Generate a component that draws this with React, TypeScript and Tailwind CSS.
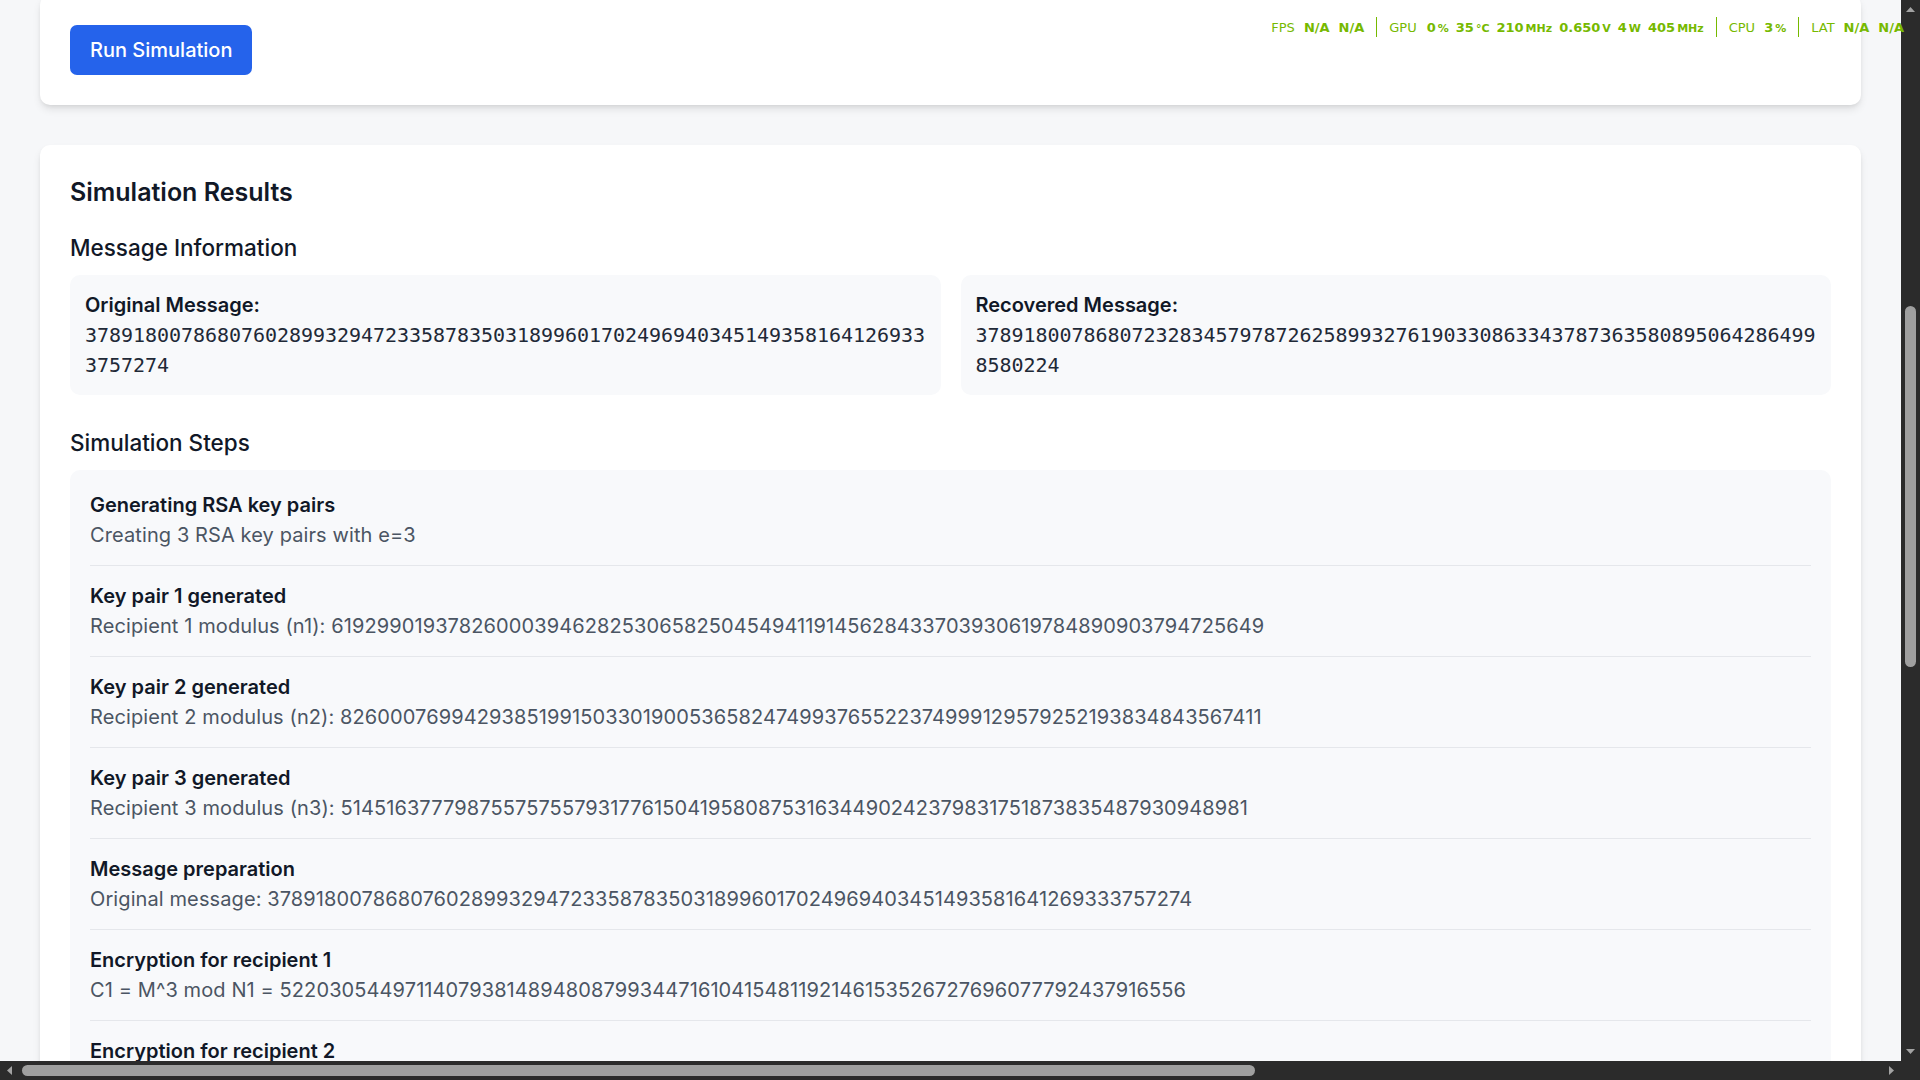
import React from "react";

const steps: { title: string; desc: string }[] = [
  { title: "Generating RSA key pairs", desc: "Creating 3 RSA key pairs with e=3" },
  {
    title: "Key pair 1 generated",
    desc: "Recipient 1 modulus (n1): 61929901937826000394628253065825045494119145628433703930619784890903794725649",
  },
  {
    title: "Key pair 2 generated",
    desc: "Recipient 2 modulus (n2): 82600076994293851991503301900536582474993765522374999129579252193834843567411",
  },
  {
    title: "Key pair 3 generated",
    desc: "Recipient 3 modulus (n3): 51451637779875575755793177615041958087531634490242379831751873835487930948981",
  },
  {
    title: "Message preparation",
    desc: "Original message: 37891800786807602899329472335878350318996017024969403451493581641269333757274",
  },
  {
    title: "Encryption for recipient 1",
    desc: "C1 = M^3 mod N1 = 52203054497114079381489480879934471610415481192146153526727696077792437916556",
  },
  {
    title: "Encryption for recipient 2",
    desc: "C2 = M^3 mod N2 = 41207795630931127735006215590846913562337917548340151093011376294488208012657",
  },
];

function Val({ v, u }: { v: string; u?: string }) {
  return (
    <span className="flex items-baseline">
      <span className="font-bold">{v}</span>
      {u ? <span className="ml-[2px] text-[11px] font-bold">{u}</span> : null}
    </span>
  );
}

function Sep() {
  return <span className="mx-[12px] h-[20px] w-px bg-[#76b900]" />;
}

function Overlay() {
  return (
    <div className="absolute right-[16px] top-[17px] flex h-[20px] items-center font-['DejaVu_Sans',sans-serif] text-[13px] leading-none text-[#76b900]">
      <span className="flex items-center gap-[9px]">
        <span>FPS</span>
        <Val v="N/A" />
        <Val v="N/A" />
      </span>
      <Sep />
      <span className="flex items-center gap-[7px]">
        <span className="mr-[3px]">GPU</span>
        <Val v="0" u="%" />
        <Val v="35" u="°C" />
        <Val v="210" u="MHz" />
        <Val v="0.650" u="V" />
        <Val v="4" u="W" />
        <Val v="405" u="MHz" />
      </span>
      <Sep />
      <span className="flex items-center gap-[9px]">
        <span>CPU</span>
        <Val v="3" u="%" />
      </span>
      <Sep />
      <span className="flex items-center gap-[9px]">
        <span>LAT</span>
        <Val v="N/A" />
        <Val v="N/A" />
      </span>
    </div>
  );
}

function Tri({ dir }: { dir: "up" | "down" | "left" | "right" }) {
  const pts =
    dir === "up"
      ? "1,8 5.5,3 10,8"
      : dir === "down"
      ? "1,3 5.5,8 10,3"
      : dir === "left"
      ? "8,1 3,5.5 8,10"
      : "3,1 8,5.5 3,10";
  return (
    <svg width="11" height="11" viewBox="0 0 11 11">
      <polygon points={pts} fill="#a3a3a3" />
    </svg>
  );
}

function MsgBox({ label, value }: { label: string; value: string }) {
  const a = value.slice(0, 70);
  const b = value.slice(70);
  return (
    <div className="rounded-[10px] bg-[#f8f9fb] p-[15px]">
      <div className="text-[20px] font-semibold leading-[30px] text-[#111827]">{label}</div>
      <div className="font-['DejaVu_Sans_Mono',monospace] text-[20px] leading-[30px] tracking-[-0.04px] whitespace-nowrap text-[#1f2937]">
        <div>{a}</div>
        <div>{b}</div>
      </div>
    </div>
  );
}

export default function App() {
  return (
    <div className="relative flex h-[1080px] w-[1920px] flex-col overflow-hidden bg-[#f6f7f9] font-['Inter',sans-serif]">
      <div className="flex min-h-0 flex-1">
        <main className="min-w-0 flex-1 overflow-hidden px-[40px]">
          <section className="-mt-[5px] rounded-[10px] bg-white p-[30px] shadow-[0_5px_8px_-1px_rgba(0,0,0,0.1),0_2px_5px_-2px_rgba(0,0,0,0.1)]">
            <button className="h-[50px] rounded-[7px] bg-[#2563eb] px-[20px] text-[20px] font-medium leading-[30px] text-white">
              Run Simulation
            </button>
          </section>

          <section className="mt-[40px] rounded-[10px] bg-white p-[30px] shadow-[0_5px_8px_-1px_rgba(0,0,0,0.1),0_2px_5px_-2px_rgba(0,0,0,0.1)]">
            <h2 className="mb-[20px] text-[25px] font-semibold leading-[35px] text-[#111827]">Simulation Results</h2>
            <h3 className="mb-[10px] text-[22.5px] font-medium leading-[35px] text-[#111827]">Message Information</h3>
            <div className="grid grid-cols-2 gap-[20px]">
              <MsgBox
                label="Original Message:"
                value="37891800786807602899329472335878350318996017024969403451493581641269333757274"
              />
              <MsgBox
                label="Recovered Message:"
                value="37891800786807232834579787262589932761903308633437873635808950642864998580224"
              />
            </div>

            <h3 className="mb-[10px] mt-[30px] text-[22.5px] font-medium leading-[35px] text-[#111827]">Simulation Steps</h3>
            <div className="flex flex-col gap-[15px] rounded-[10px] bg-[#f8f9fb] p-[20px]">
              {steps.map((s) => (
                <div key={s.title} className="border-b border-[#e5e7eb] pb-[15px]">
                  <div className="text-[20px] font-semibold leading-[30px] text-[#111827]">{s.title}</div>
                  <div className="text-[20px] leading-[30px] tracking-[0.1px] text-[#4b5563]">{s.desc}</div>
                </div>
              ))}
            </div>
          </section>
        </main>

        <div className="flex w-[19px] flex-col bg-[#2b2b2b]">
          <div className="flex h-[19px] items-center justify-center">
            <Tri dir="up" />
          </div>
          <div className="flex flex-1 flex-col items-center">
            <div className="mt-[287px] h-[361px] w-[11px] rounded-full bg-[#9f9f9f]" />
          </div>
          <div className="flex h-[19px] items-center justify-center">
            <Tri dir="down" />
          </div>
        </div>
      </div>

      <div className="flex h-[19px] bg-[#2b2b2b]">
        <div className="flex w-[19px] items-center justify-center">
          <Tri dir="left" />
        </div>
        <div className="flex flex-1 items-center">
          <div className="ml-[3px] h-[11px] w-[1233px] rounded-full bg-[#9f9f9f]" />
        </div>
        <div className="flex w-[19px] items-center justify-center">
          <Tri dir="right" />
        </div>
        <div className="w-[19px]" />
      </div>

      <Overlay />
    </div>
  );
}
